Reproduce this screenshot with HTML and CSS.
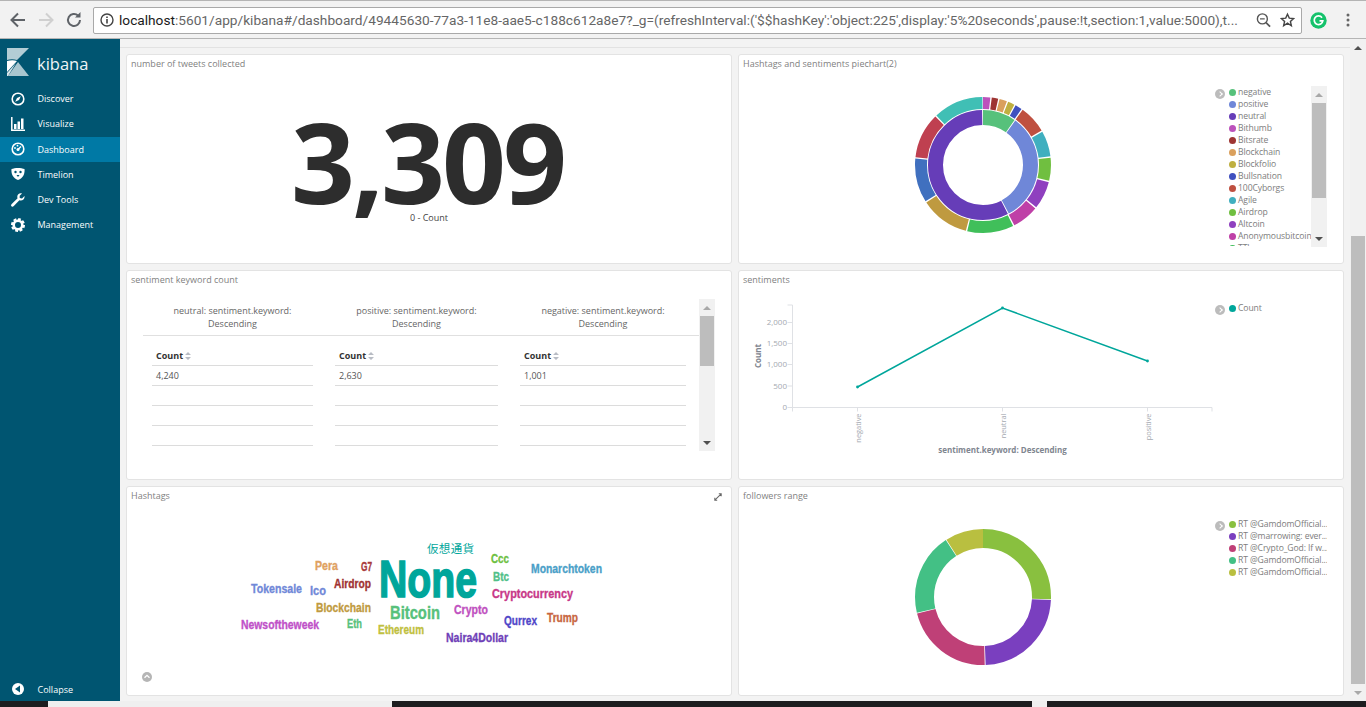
FILE: index.html
```html
<!DOCTYPE html>
<html lang="en">
<head>
<meta charset="utf-8">
<title>Dashboard - Kibana</title>
<link rel="stylesheet" href="styles.css">
</head>
<body>
<div class="tabstrip"></div>
<header class="toolbar">
  <svg class="tb-btn" width="22" height="22" viewBox="0 0 22 22"><path d="M18 11H5M11 4.5 4.5 11l6.500 6.500" fill="none" stroke="#5f6368" stroke-width="2"/></svg>
  <svg class="tb-btn" width="22" height="22" viewBox="0 0 22 22"><path d="M4 11h13M11 4.500l6.500 6.500-6.500 6.500" fill="none" stroke="#d0d0d0" stroke-width="2"/></svg>
  <svg class="tb-btn" width="22" height="22" viewBox="0 0 22 22"><path d="M17 11a6 6 0 1 1-1.800-4.300" fill="none" stroke="#5f6368" stroke-width="2"/><path d="M17.500 3v5.500H12z" fill="#5f6368"/></svg>
  <div class="omnibox">
    <svg class="ob-info" width="14" height="14" viewBox="0 0 14 14"><circle cx="7" cy="7" r="6" fill="none" stroke="#444" stroke-width="1.400"/><path d="M6.200 6h1.600v4.500H6.200zM6.200 3.400h1.600V5H6.200z" fill="#444"/></svg>
    <div class="url"><span class="url-host">localhost</span>:5601/app/kibana#/dashboard/49445630-77a3-11e8-aae5-c188c612a8e7?_g=(refreshInterval:('$$hashKey':'object:225',display:'5%20seconds',pause:!t,section:1,value:5000),t...</div>
    <svg width="16" height="16" viewBox="0 0 16 16"><circle cx="6.800" cy="6.800" r="5.300" fill="none" stroke="#555" stroke-width="1.500"/><path d="M4.300 6.800h5" stroke="#555" stroke-width="1.300"/><path d="m10.700 10.700 4.300 4.300" stroke="#555" stroke-width="1.800"/></svg>
    <svg class="ob-star" width="16" height="16" viewBox="0 0 16 16"><path d="m8 1.800 1.900 4.200 4.600.500-3.400 3.100 1 4.500L8 11.300l-4.100 2.800 1-4.500L1.500 6.500 6.100 6z" fill="none" stroke="#444" stroke-width="1.500"/></svg>
  </div>
  <svg class="grammarly" width="17" height="17" viewBox="0 0 17 17"><circle cx="8.500" cy="8.500" r="8.200" fill="#15c26b"/><path d="M12 5.700a4.300 4.300 0 1 0 .8 3.100H9.500" fill="none" stroke="#fff" stroke-width="1.700"/></svg>
  <svg class="kebab" width="4" height="14" viewBox="0 0 4 14"><circle cx="2" cy="2" r="1.500" fill="#666"/><circle cx="2" cy="7" r="1.500" fill="#666"/><circle cx="2" cy="12" r="1.500" fill="#666"/></svg>
</header>

<div class="app">
  <nav class="sidebar">
    <div class="brand">
      <svg width="22" height="28" viewBox="0 0 22 28"><path d="M0 0h22L10 12C7 11 3 11 0 12z" fill="#b3cdd5"/><path d="M0 13c4-1 7-1 10 0L0 24z" fill="#fff"/><path d="M1 28 11 14l11 14z" fill="#a9c6cf"/><path d="M0 25 9 15l-8 13H0z" fill="#d9e6ea"/></svg>
      <span class="brand-name">kibana</span>
    </div>
    <a class="nav-item"><svg class="nav-ic" width="14" height="14" viewBox="0 0 14 14"><circle cx="7" cy="7" r="5.800" fill="none" stroke="#fff" stroke-width="1.600"/><path d="M9.800 4.200 8 8 4.200 9.800 6 6z" fill="#fff"/></svg><span>Discover</span></a>
    <a class="nav-item"><svg class="nav-ic" width="14" height="14" viewBox="0 0 14 14"><path d="M.8 0v13.200H14" fill="none" stroke="#fff" stroke-width="1.500"/><path d="M3 7h2.500v5H3zM6.500 4.500H9V12H6.500zM10 1.500h2.500V12H10z" fill="#fff"/></svg><span>Visualize</span></a>
    <a class="nav-item active"><svg class="nav-ic" width="14" height="14" viewBox="0 0 14 14"><circle cx="7" cy="7" r="5.800" fill="none" stroke="#fff" stroke-width="1.600"/><circle cx="7" cy="7.500" r="1.500" fill="#fff"/><circle cx="4" cy="6" r=".9" fill="#fff"/><circle cx="6.500" cy="3.700" r=".9" fill="#fff"/><path d="m7 7.500 3-3" stroke="#fff" stroke-width="1.300"/></svg><span>Dashboard</span></a>
    <a class="nav-item"><svg class="nav-ic" width="14" height="14" viewBox="0 0 14 14"><path d="M.5 2C4 .5 10 .5 13.500 2c.5 5-1.500 9-6.500 11C2 11 0 7 .5 2z" fill="#fff"/><circle cx="4.500" cy="5" r="1.200" fill="#005571"/><circle cx="9.500" cy="5" r="1.200" fill="#005571"/><path d="M5.500 8h3L7 10z" fill="#005571"/></svg><span>Timelion</span></a>
    <a class="nav-item"><svg class="nav-ic" width="14" height="14" viewBox="0 0 14 14"><path d="M13.500 3 11 5.400 8.700 5V2.800L11 .5C8.500-.3 6 1.500 6.300 4.200c.1.500.2.800.3 1.100L.7 11c-.9.900-.9 1.600-.2 2.300.7.700 1.400.7 2.300-.2l5.600-5.800c2.900 1 5.600-1.300 5.100-4.300z" fill="#fff"/></svg><span>Dev Tools</span></a>
    <a class="nav-item"><svg class="nav-ic" width="14" height="14" viewBox="0 0 14 14"><circle cx="7" cy="7" r="4.300" fill="none" stroke="#fff" stroke-width="2.600"/><circle cx="7" cy="7" r="6" fill="none" stroke="#fff" stroke-width="2" pathLength="32" stroke-dasharray="2.500 1.500"/></svg><span>Management</span></a>
    <a class="nav-item collapse"><svg class="nav-ic" width="14" height="14" viewBox="0 0 14 14"><circle cx="7" cy="7" r="6" fill="#fff"/><path d="M9 3.500v7L4 7z" fill="#005571"/></svg><span>Collapse</span></a>
  </nav>

  <main class="content">
    <div class="dash-grid">

      <section class="panel">
        <h2 class="panel-title">number of tweets collected</h2>
        <div class="vis metric">
          <div class="metric-value">3,309</div>
          <div class="metric-label">0 - Count</div>
        </div>
      </section>

      <section class="panel">
        <h2 class="panel-title">Hashtags and sentiments piechart(2)</h2>
        <div class="vis">
          <div class="chart-area">
            <svg width="138" height="138" viewBox="0 0 138 138">
              <g fill="none" stroke-width="12" transform="rotate(-90 69 69)">
                <circle cx="69" cy="69" r="62" pathLength="360" stroke="#bc52bc" stroke-dasharray="6.300 360" stroke-dashoffset="0"/>
                <circle cx="69" cy="69" r="62" pathLength="360" stroke="#9e3533" stroke-dasharray="5.500 360" stroke-dashoffset="-7.500"/>
                <circle cx="69" cy="69" r="62" pathLength="360" stroke="#daa05d" stroke-dasharray="6.400 360" stroke-dashoffset="-14.200"/>
                <circle cx="69" cy="69" r="62" pathLength="360" stroke="#bfaf40" stroke-dasharray="5.800 360" stroke-dashoffset="-21.700"/>
                <circle cx="69" cy="69" r="62" pathLength="360" stroke="#4050bf" stroke-dasharray="5.800 360" stroke-dashoffset="-28.700"/>
                <circle cx="69" cy="69" r="62" pathLength="360" stroke="#bf5040" stroke-dasharray="23.800 360" stroke-dashoffset="-35.700"/>
                <circle cx="69" cy="69" r="62" pathLength="360" stroke="#40afbf" stroke-dasharray="21.800 360" stroke-dashoffset="-60.700"/>
                <circle cx="69" cy="69" r="62" pathLength="360" stroke="#70bf40" stroke-dasharray="19.800 360" stroke-dashoffset="-83.700"/>
                <circle cx="69" cy="69" r="62" pathLength="360" stroke="#8f40bf" stroke-dasharray="23.800 360" stroke-dashoffset="-104.700"/>
                <circle cx="69" cy="69" r="62" pathLength="360" stroke="#bf40a7" stroke-dasharray="22.800 360" stroke-dashoffset="-129.700"/>
                <circle cx="69" cy="69" r="62" pathLength="360" stroke="#40bf5a" stroke-dasharray="39.800 360" stroke-dashoffset="-153.700"/>
                <circle cx="69" cy="69" r="62" pathLength="360" stroke="#bf9a40" stroke-dasharray="41.800 360" stroke-dashoffset="-194.700"/>
                <circle cx="69" cy="69" r="62" pathLength="360" stroke="#4070bf" stroke-dasharray="37.800 360" stroke-dashoffset="-237.700"/>
                <circle cx="69" cy="69" r="62" pathLength="360" stroke="#bf4050" stroke-dasharray="38.800 360" stroke-dashoffset="-276.700"/>
                <circle cx="69" cy="69" r="62" pathLength="360" stroke="#40bfb5" stroke-dasharray="42.800 360" stroke-dashoffset="-316.700"/>
              </g>
              <g fill="none" stroke-width="15" transform="rotate(-90 69 69)">
                <circle cx="69" cy="69" r="47.500" pathLength="360" stroke="#57c17b" stroke-dasharray="35 360" stroke-dashoffset="0"/>
                <circle cx="69" cy="69" r="47.500" pathLength="360" stroke="#6f87d8" stroke-dasharray="116 360" stroke-dashoffset="-36"/>
                <circle cx="69" cy="69" r="47.500" pathLength="360" stroke="#663db8" stroke-dasharray="206 360" stroke-dashoffset="-153"/>
              </g>
            </svg>
          </div>
          <div class="legend">
            <span class="legend-toggle"></span>
            <ul class="legend-list">
              <li><i class="dot d-neg"></i>negative</li>
              <li><i class="dot d-pos"></i>positive</li>
              <li><i class="dot d-neu"></i>neutral</li>
              <li><i class="dot d-bith"></i>Bithumb</li>
              <li><i class="dot d-bits"></i>Bitsrate</li>
              <li><i class="dot d-bloc"></i>Blockchain</li>
              <li><i class="dot d-blof"></i>Blockfolio</li>
              <li><i class="dot d-bull"></i>Bullsnation</li>
              <li><i class="dot d-cyb"></i>100Cyborgs</li>
              <li><i class="dot d-agi"></i>Agile</li>
              <li><i class="dot d-air"></i>Airdrop</li>
              <li><i class="dot d-alt"></i>Altcoin</li>
              <li><i class="dot d-ano"></i>Anonymousbitcoin</li>
              <li><i class="dot d-tth"></i>TTh</li>
            </ul>
            <div class="vscroll">
              <span class="arrow up"></span>
              <span class="thumb thumb-legend"></span>
              <span class="arrow down"></span>
            </div>
          </div>
        </div>
      </section>

      <section class="panel">
        <h2 class="panel-title">sentiment keyword count</h2>
        <div class="table-vis">
          <div class="table-main">
            <div class="split-row split-heads">
              <div class="split-title">neutral: sentiment.keyword: Descending</div>
              <div class="split-title">positive: sentiment.keyword: Descending</div>
              <div class="split-title">negative: sentiment.keyword: Descending</div>
            </div>
            <div class="split-row split-body">
              <div class="data-col">
                <div class="cell head">Count<svg class="sort" width="6" height="8" viewBox="0 0 6 8"><path d="M3 0l3 3H0zM3 8 0 5h6z" fill="#b8bcc4"/></svg></div>
                <div class="cell">4,240</div><div class="cell"></div><div class="cell"></div><div class="cell"></div>
              </div>
              <div class="data-col">
                <div class="cell head">Count<svg class="sort" width="6" height="8" viewBox="0 0 6 8"><path d="M3 0l3 3H0zM3 8 0 5h6z" fill="#b8bcc4"/></svg></div>
                <div class="cell">2,630</div><div class="cell"></div><div class="cell"></div><div class="cell"></div>
              </div>
              <div class="data-col">
                <div class="cell head">Count<svg class="sort" width="6" height="8" viewBox="0 0 6 8"><path d="M3 0l3 3H0zM3 8 0 5h6z" fill="#b8bcc4"/></svg></div>
                <div class="cell">1,001</div><div class="cell"></div><div class="cell"></div><div class="cell"></div>
              </div>
            </div>
          </div>
          <div class="vscroll">
            <span class="arrow up"></span>
            <span class="thumb thumb-table"></span>
            <span class="arrow down"></span>
          </div>
        </div>
      </section>

      <section class="panel">
        <h2 class="panel-title">sentiments</h2>
        <div class="vis">
          <svg class="line-chart" width="477" height="182" viewBox="738 290 477 182">
            <g stroke="#dfe1e5" fill="none">
              <path d="M792.500 305v102.500M787.500 305h5M787.500 322.500h5M787.500 343.500h5M787.500 364.500h5M787.500 386h5M787.500 407.500H1212M1212 407.500v4M792.500 407.500v4M857.500 407.500v4M1002.500 407.500v4M1147.500 407.500v4"/>
            </g>
            <g class="tick-y" text-anchor="end">
              <text x="787" y="325">2,000</text>
              <text x="787" y="346">1,500</text>
              <text x="787" y="367">1,000</text>
              <text x="787" y="388.500">500</text>
              <text x="787" y="410">0</text>
            </g>
            <g class="tick-x" text-anchor="end">
              <text transform="translate(860.500 413.500) rotate(-90)">negative</text>
              <text transform="translate(1005.500 413.500) rotate(-90)">neutral</text>
              <text transform="translate(1150.500 413.500) rotate(-90)">positive</text>
            </g>
            <text class="axis-title" transform="translate(761 356) rotate(-90)" text-anchor="middle">Count</text>
            <text class="axis-title" x="1002.500" y="452.500" text-anchor="middle">sentiment.keyword: Descending</text>
            <path d="M857.500 387 1002.500 308 1147.500 361" fill="none" stroke="#00a69b" stroke-width="1.500"/>
            <circle cx="857.500" cy="387" r="1.400" fill="#00a69b"/><circle cx="1002.500" cy="308" r="1.400" fill="#00a69b"/><circle cx="1147.500" cy="361" r="1.400" fill="#00a69b"/>
          </svg>
          <div class="legend">
            <span class="legend-toggle"></span>
            <ul class="legend-list">
              <li><i class="dot d-count"></i>Count</li>
            </ul>
          </div>
        </div>
      </section>

      <section class="panel">
        <h2 class="panel-title">Hashtags</h2>
        <svg class="expand" width="8" height="8" viewBox="0 0 10 10"><path d="M6 1h3v3M4 9H1V6M9 1 1 9" fill="none" stroke="#666" stroke-width="1.300"/></svg>
        <svg class="cloud" width="606" height="182" viewBox="126 506 606 182">
          <text class="cjk" x="427" y="553" fill="#00a69b" textLength="47">仮想通貨</text>
          <text x="379" y="597" class="w w-big" font-size="52" color="#00a69b" textLength="98" lengthAdjust="spacingAndGlyphs">None</text>
          <text x="315" y="570" class="w" font-size="13" color="#e0a161" textLength="23" lengthAdjust="spacingAndGlyphs">Pera</text>
          <text x="361" y="571" class="w" font-size="13" color="#a83838" textLength="11" lengthAdjust="spacingAndGlyphs">G7</text>
          <text x="334" y="587.500" class="w" font-size="13" color="#a03232" textLength="37" lengthAdjust="spacingAndGlyphs">Airdrop</text>
          <text x="491" y="563" class="w" font-size="13" color="#6cc040" textLength="18" lengthAdjust="spacingAndGlyphs">Ccc</text>
          <text x="493" y="581" class="w" font-size="13" color="#50c088" textLength="16" lengthAdjust="spacingAndGlyphs">Btc</text>
          <text x="531" y="573" class="w" font-size="13" color="#4a9fc8" textLength="71" lengthAdjust="spacingAndGlyphs">Monarchtoken</text>
          <text x="251" y="592.500" class="w" font-size="13" color="#7088d8" textLength="51" lengthAdjust="spacingAndGlyphs">Tokensale</text>
          <text x="310" y="595" class="w" font-size="13" color="#7088d8" textLength="16" lengthAdjust="spacingAndGlyphs">Ico</text>
          <text x="492" y="597.500" class="w" font-size="13" color="#c83888" textLength="81" lengthAdjust="spacingAndGlyphs">Cryptocurrency</text>
          <text x="316" y="611.500" class="w" font-size="13" color="#bf9a40" textLength="55" lengthAdjust="spacingAndGlyphs">Blockchain</text>
          <text x="390" y="618.500" class="w" font-size="17.500" color="#57c17b" textLength="50" lengthAdjust="spacingAndGlyphs">Bitcoin</text>
          <text x="454" y="614" class="w" font-size="13" color="#c050c0" textLength="34" lengthAdjust="spacingAndGlyphs">Crypto</text>
          <text x="504" y="625" class="w" font-size="13" color="#4f46c8" textLength="33" lengthAdjust="spacingAndGlyphs">Qurrex</text>
          <text x="547" y="621.500" class="w" font-size="13" color="#c86640" textLength="31" lengthAdjust="spacingAndGlyphs">Trump</text>
          <text x="241" y="629" class="w" font-size="13" color="#c050c8" textLength="78" lengthAdjust="spacingAndGlyphs">Newsoftheweek</text>
          <text x="347" y="627.500" class="w" font-size="13" color="#57c17b" textLength="15" lengthAdjust="spacingAndGlyphs">Eth</text>
          <text x="378" y="634" class="w" font-size="13" color="#bfc040" textLength="46" lengthAdjust="spacingAndGlyphs">Ethereum</text>
          <text x="446" y="642" class="w" font-size="13" color="#6f3fb8" textLength="62" lengthAdjust="spacingAndGlyphs">Naira4Dollar</text>
        </svg>
        <svg class="spy" width="10" height="10" viewBox="0 0 10 10"><circle cx="5" cy="5" r="5" fill="#b5b5b5"/><path d="m2.500 5.800 2.500-2.500 2.500 2.500" fill="none" stroke="#fff" stroke-width="1.300"/></svg>
      </section>

      <section class="panel">
        <h2 class="panel-title">followers range</h2>
        <div class="vis">
          <div class="chart-area">
            <svg width="138" height="138" viewBox="0 0 138 138">
              <g fill="none" stroke-width="19" transform="rotate(-90 69 69)">
                <circle cx="69" cy="69" r="58.500" pathLength="360" stroke="#89c03f" stroke-dasharray="92 360"/>
                <circle cx="69" cy="69" r="58.500" pathLength="360" stroke="#7a3fbf" stroke-dasharray="85 360" stroke-dashoffset="-92.700"/>
                <circle cx="69" cy="69" r="58.500" pathLength="360" stroke="#bf4077" stroke-dasharray="77.300 360" stroke-dashoffset="-178.500"/>
                <circle cx="69" cy="69" r="58.500" pathLength="360" stroke="#43c085" stroke-dasharray="70.300 360" stroke-dashoffset="-256.500"/>
                <circle cx="69" cy="69" r="58.500" pathLength="360" stroke="#b9bf40" stroke-dasharray="32.500 360" stroke-dashoffset="-327.500"/>
              </g>
            </svg>
          </div>
          <div class="legend">
            <span class="legend-toggle"></span>
            <ul class="legend-list legend-narrow">
              <li><i class="dot d-f1"></i>RT @GamdomOfficial...</li>
              <li><i class="dot d-f2"></i>RT @marrowing: ever...</li>
              <li><i class="dot d-f3"></i>RT @Crypto_God: If w...</li>
              <li><i class="dot d-f4"></i>RT @GamdomOfficial...</li>
              <li><i class="dot d-f5"></i>RT @GamdomOfficial...</li>
            </ul>
          </div>
        </div>
      </section>

    </div>
  </main>

  <div class="vscroll page-scroll">
    <span class="arrow up"></span>
    <span class="thumb thumb-page"></span>
    <span class="arrow down"></span>
  </div>
</div>

<footer class="taskbar">
  <span class="tk dark tk-a"></span><span class="tk light tk-b"></span><span class="tk dark tk-c"></span><span class="tk light tk-d"></span><span class="tk dark tk-e"></span>
</footer>
</body>
</html>
```

FILE: styles.css
```css
* { box-sizing: border-box; }
html, body { margin: 0; padding: 0; height: 100%; overflow: hidden; }
body {
  width: 1366px;
  height: 707px;
  display: flex;
  flex-direction: column;
  font-family: "Open Sans", "Noto Sans", sans-serif;
  font-size: 9px;
  background: #f2f2f2;
}

/* browser chrome */
.tabstrip { height: 3px; background: #f2f2f2; border-top: 1px solid #b4b4b4; flex: none; }
.toolbar {
  flex: none;
  height: 36px;
  display: flex;
  align-items: center;
  background: #f2f2f2;
  border-bottom: 1px solid #b5b5b5;
  padding: 0 0 1px 7px;
}
.tb-btn { margin-right: 6px; flex: none; }
.omnibox {
  flex: none;
  margin-left: 2px;
  width: 1209px;
  height: 27px;
  background: #fff;
  border: 1px solid #a9a9a9;
  border-radius: 2px;
  display: flex;
  align-items: center;
  padding: 0 6px;
}
.ob-info { margin-right: 5px; flex: none; }
.ob-star { margin-left: 9px; }
.url {
  width: 1134px;
  flex: none;
  margin-right: 3px;
  white-space: nowrap;
  overflow: hidden;
  font-family: "Roboto", sans-serif;
  font-size: 13.700px;
  color: #666;
}
.url-host { color: #1a1a1a; }
.grammarly { margin-left: 8px; flex: none; }
.kebab { margin-left: 19px; flex: none; }

/* app layout */
.app { flex: 1; min-height: 0; display: flex; }
.sidebar {
  flex: none;
  width: 120px;
  background: #005571;
  display: flex;
  flex-direction: column;
  color: #fff;
}
.brand { height: 47px; padding: 9px 0 0 7px; display: flex; align-items: flex-start; }
.brand-name { font-size: 16.500px; line-height: 31px; margin-left: 8px; color: #eef4f6; }
.nav-item {
  height: 25.250px;
  display: flex;
  align-items: center;
  font-size: 9px;
  font-weight: 400;
  color: #fbfdfe;
  padding-left: 11px;
}
.nav-ic { margin-right: 12.500px; flex: none; }
.nav-item.active { background: #0079a5; }
.nav-item.collapse { margin-top: auto; margin-bottom: -1px; height: 26px; }

.content {
  flex: 1;
  min-width: 0;
  padding-top: 8px;
  background: #f3f3f3;
}
.dash-grid {
  border-top: 1px solid #e2e2e2;
  padding: 6px 6px 0;
  display: grid;
  grid-template-columns: 1fr 1fr;
  grid-auto-rows: 210px;
  gap: 6px;
}

/* panels */
.panel {
  position: relative;
  background: #fff;
  border-radius: 3px;
  box-shadow: inset 0 0 0 1px #e3e3e3;
  display: flex;
  flex-direction: column;
  overflow: hidden;
}
.panel-title {
  margin: 0;
  flex: none;
  height: 20px;
  line-height: 20px;
  padding-left: 5px;
  font-size: 9px;
  font-weight: 400;
  color: #7f7f7f;
}
.vis { flex: none; height: 182px; display: flex; }
.chart-area {
  flex: none;
  width: 477px;
  padding-left: 13px;
  display: flex;
  align-items: center;
  justify-content: center;
}

/* metric */
.metric { flex-direction: column; align-items: center; justify-content: flex-start; }
.metric-value {
  font-size: 112px;
  line-height: 100px;
  font-weight: 700;
  letter-spacing: -3px;
  color: #2d2d2d;
  margin: 37px 0 0 -3px;
}
.metric-label { font-size: 9px; line-height: 12px; color: #444; margin-top: 1px; }

/* legend */
.legend { flex: none; width: 112px; margin-top: 12px; height: 161px; display: flex; align-items: flex-start; position: relative; }
.legend-toggle {
  flex: none;
  width: 10px;
  height: 10px;
  margin: 3px 4px 0 0;
  border-radius: 50%;
  background: #bcbcbc;
  position: relative;
}
.legend-toggle::after {
  content: "";
  position: absolute;
  left: 3px;
  top: 3px;
  width: 3px;
  height: 3px;
  border-top: 1.300px solid #fff;
  border-right: 1.300px solid #fff;
  transform: rotate(45deg);
}
.legend-list {
  list-style: none;
  margin: 0;
  padding: 0;
  flex: 1;
  min-width: 0;
  height: 160px;
  overflow: hidden;
  color: #7d7d7d;
  font-size: 8.600px;
  letter-spacing: -.1px;
  line-height: 12px;
}
.legend-list li { display: flex; align-items: center; height: 12px; white-space: nowrap; }
.dot { flex: none; width: 7px; height: 7px; border-radius: 50%; margin-right: 2px; }
.d-neg { background: #57c17b; } .d-pos { background: #6f87d8; } .d-neu { background: #663db8; }
.d-bith { background: #bc52bc; } .d-bits { background: #9e3533; } .d-bloc { background: #daa05d; }
.d-blof { background: #bfaf40; } .d-bull { background: #4050bf; } .d-cyb { background: #bf5040; }
.d-agi { background: #40afbf; } .d-air { background: #70bf40; } .d-alt { background: #8f40bf; }
.d-ano { background: #bf40a7; } .d-tth { background: #40bf5a; } .d-count { background: #00a69b; }
.d-f1 { background: #89c03f; } .d-f2 { background: #7a3fbf; } .d-f3 { background: #bf4077; }
.d-f4 { background: #43c085; } .d-f5 { background: #b9bf40; }

/* scrollbars */
.vscroll {
  flex: none;
  width: 16px;
  background: #f1f1f1;
  display: flex;
  flex-direction: column;
  align-items: center;
}
.legend .vscroll { height: 161px; }
.arrow { flex: none; height: 17px; width: 100%; display: flex; align-items: center; justify-content: center; }
.arrow::before { content: ""; border-left: 4px solid transparent; border-right: 4px solid transparent; }
.arrow.up::before { border-bottom: 4px solid #a8a8a8; }
.arrow.down { margin-top: auto; }
.arrow.down::before { border-top: 4px solid #505050; }
.thumb { flex: none; width: 13.500px; background: #bdbdbd; }
.thumb-legend { height: 95px; }
.thumb-table { height: 50px; }
.page-scroll { width: 16px; height: 100%; }
.page-scroll .arrow.up::before { border-bottom-color: #505050; }
.page-scroll .arrow.down { margin-top: 0; }
.page-scroll .arrow.down::before { border-top-color: #a8a8a8; }
.thumb-page { margin-top: auto; height: 448px; width: 14px; }

/* data table */
.table-vis {
  flex: none;
  height: 152px;
  margin: 9px 17px 0 17px;
  display: flex;
}
.table-main { flex: 1; min-width: 0; overflow: hidden; }
.split-row {
  display: grid;
  grid-template-columns: 161px 163px 166px;
  column-gap: 22px;
  padding-left: 9px;
}
.split-heads { height: 37px; padding-top: 5px; border-bottom: 1px solid #e0e0e0; }
.split-title { text-align: center; line-height: 13px; color: #666; padding: 0 18px; }
.split-body { padding-top: 10px; }
.cell { height: 20px; line-height: 19px; padding-left: 4px; border-bottom: 1px solid #dcdcdc; color: #555; }
.cell.head { font-weight: 700; color: #333; display: flex; align-items: center; }
.sort { margin-left: 2px; }

/* svg charts */
.line-chart, .cloud { display: block; flex: none; }
.tick-y { font-size: 8px; fill: #a4a9b0; }
.tick-x { font-size: 7.400px; fill: #a4a9b0; }
.axis-title { font-size: 8px; font-weight: 700; fill: #7f8690; }
.w {
  font-family: "Liberation Sans Narrow", "Liberation Sans", sans-serif;
  font-weight: 700;
  fill: currentColor;
  stroke: currentColor;
  stroke-width: .35px;
}
.w-big { stroke-width: 1.600px; }
.cjk { font-family: "Noto Sans CJK JP", sans-serif; font-size: 11.500px; }
.expand { position: absolute; right: 10px; top: 7px; }
.spy { position: absolute; left: 16px; bottom: 14px; }

/* desktop strip */
.taskbar { flex: none; height: 6px; display: flex; }
.tk { display: block; height: 100%; }
.dark { background: #1d1d1f; }
.light { background: #efefef; }
.tk-a { width: 48px; } .tk-b { width: 344px; } .tk-c { width: 640px; } .tk-d { width: 15px; } .tk-e { flex: 1; }
```
